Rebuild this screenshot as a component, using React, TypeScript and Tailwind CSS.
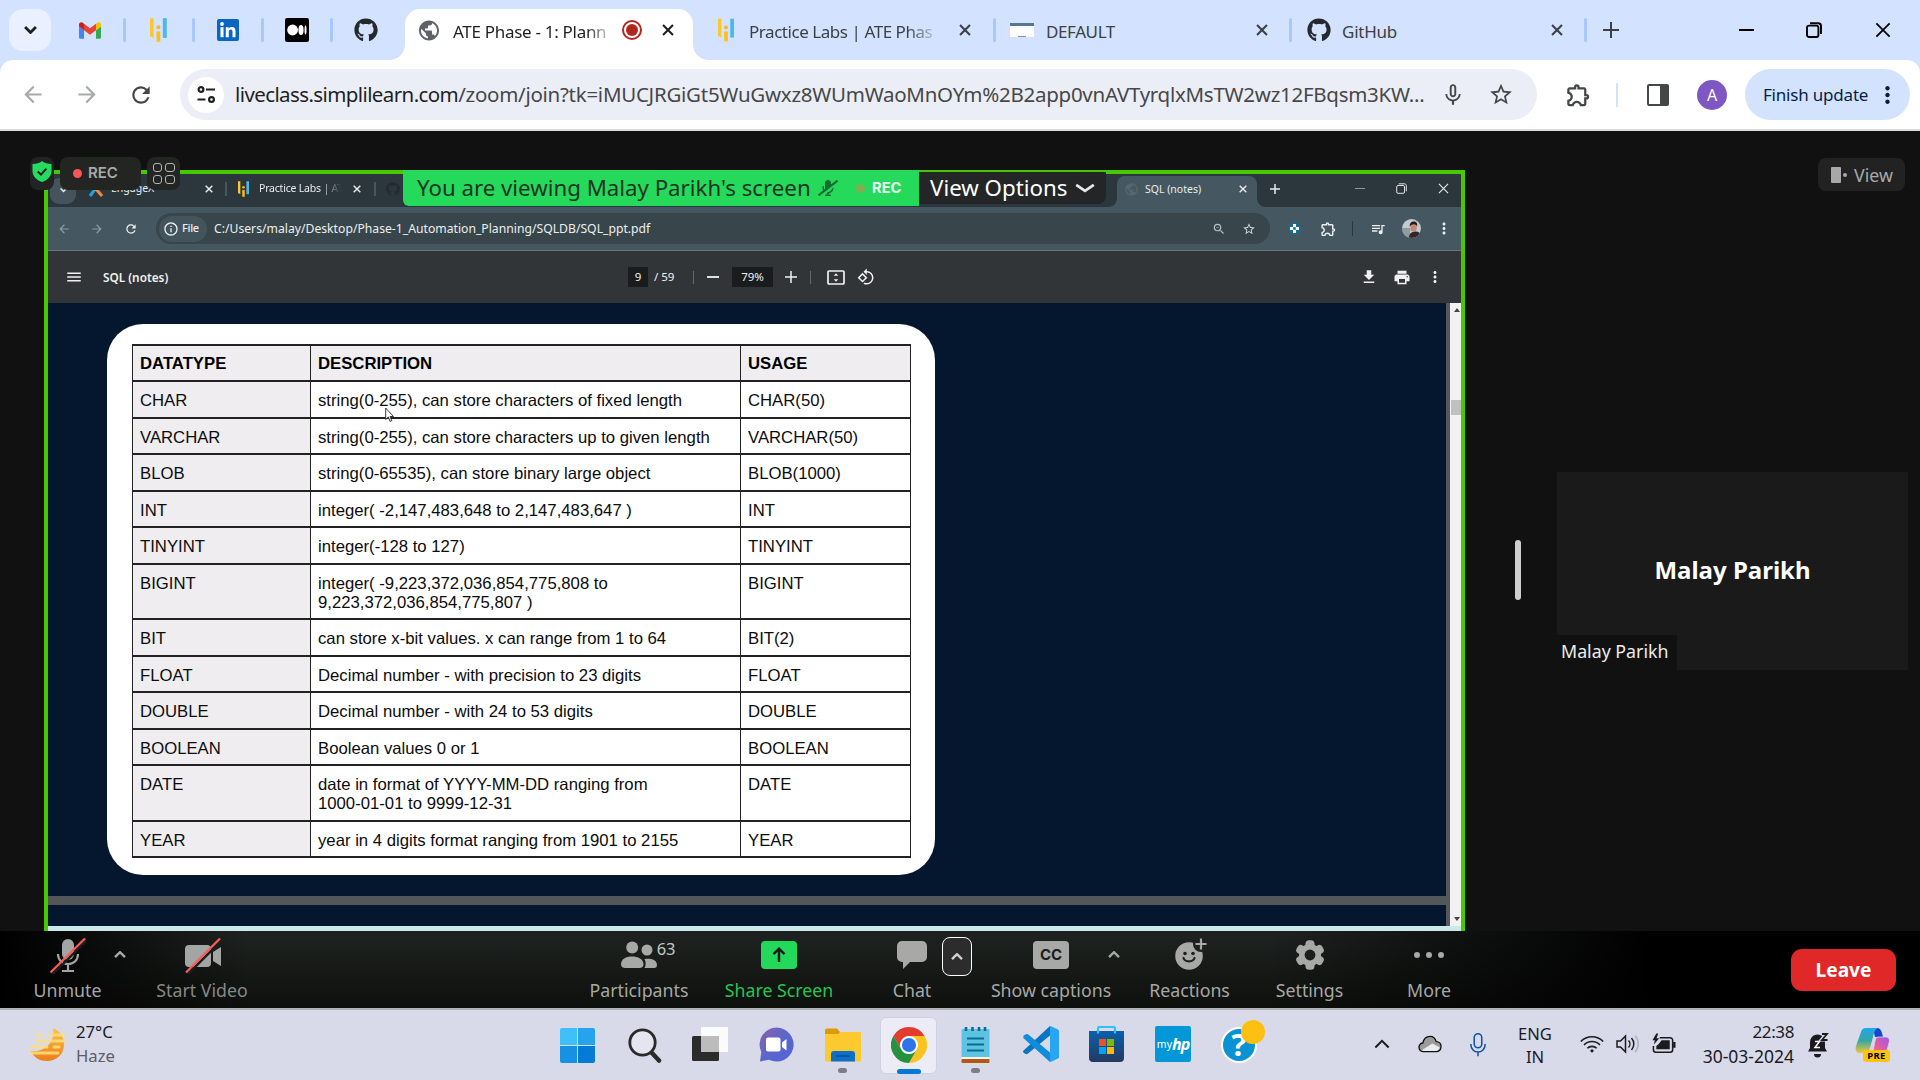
import React, { ReactNode } from "react";
import {
  MdArrowBack, MdArrowForward, MdRefresh, MdOutlineExtension, MdStarBorder, MdMicNone, MdZoomOut,
  MdQueueMusic, MdFileDownload, MdPrint, MdMoreVert, MdMenu, MdRotate90DegreesCcw, MdPublic, MdInfoOutline,
} from "react-icons/md";
import { FaGithub, FaMicrophoneSlash } from "react-icons/fa";

/* A fixed-size flex cell whose content is centred. */
function Cell({ c, children }: { c: string; children?: ReactNode }) {
  return <div className={"flex shrink-0 items-center justify-center " + c}>{children}</div>;
}
function Text({ c, children }: { c: string; children?: ReactNode }) {
  return <div className={"shrink-0 whitespace-nowrap " + c}>{children}</div>;
}
function Close({ size, w = 2.4 }: { size: number; w?: number }) {
  return (
    <svg width={size} height={size} viewBox="0 0 14 14" fill="none" stroke="currentColor" strokeWidth={w}>
      <path d="M1.2 1.2 12.8 12.8M12.8 1.2 1.2 12.8" />
    </svg>
  );
}
function Plus({ size, w = 2 }: { size: number; w?: number }) {
  return (
    <svg width={size} height={size} viewBox="0 0 16 16" fill="none" stroke="currentColor" strokeWidth={w}>
      <path d="M8 0V16M0 8H16" />
    </svg>
  );
}
function Restore({ size, w }: { size: number; w: number }) {
  return (
    <svg width={size} height={size} viewBox="0 0 16 16" fill="none" stroke="currentColor" strokeWidth={w}>
      <rect x="1" y="3.6" width="11.4" height="11.4" rx="2" />
      <path d="M4 1.2H12.2C14 1.2 15 2.2 15 4V12" />
    </svg>
  );
}
function Caret({ down = false, size = 12, w = 2.4 }: { down?: boolean; size?: number; w?: number }) {
  return (
    <svg width={size} height={size * 0.6} viewBox="0 0 12 7.2" fill="none" stroke="currentColor" strokeWidth={w}>
      <path d={down ? "M1 1 6 6 11 1" : "M1 6.2 6 1.2 11 6.2"} />
    </svg>
  );
}
function Bars({ h }: { h: number }) {
  return (
    <svg width={h * 0.7} height={h} viewBox="0 0 17 24">
      <path d="M0 0H3.6V20L0 18Z" fill="#fec62e" />
      <rect x="13" y="0" width="4" height="20" fill="#4bb8ee" />
      <circle cx="8.5" cy="9.3" r="2" fill="#fbb91a" />
      <rect x="6.6" y="13.5" width="3.8" height="10.5" fill="#fdc010" />
    </svg>
  );
}
function Gmail() {
  return (
    <svg width="22" height="17" viewBox="52 42 88 66">
      <path fill="#4285f4" d="M58 108h14V74L52 59v43c0 3.32 2.69 6 6 6" />
      <path fill="#34a853" d="M120 108h14c3.32 0 6-2.69 6-6V59l-20 15" />
      <path fill="#fbbc04" d="M120 48v26l20-15v-8c0-7.42-8.47-11.65-14.4-7.2" />
      <path fill="#ea4335" d="M72 74V48l24 18 24-18v26L96 92" />
      <path fill="#c5221f" d="M52 51v8l20 15V48l-5.6-4.2c-5.94-4.45-14.4-.22-14.4 7.2" />
    </svg>
  );
}
function Chrome() {
  return (
    <svg width="36" height="36" viewBox="0 0 48 48">
      <circle cx="24" cy="24" r="12" fill="#fff" />
      <path fill="#e33b2e" d="M24,12H44.7812a23.9939,23.9939,0,0,0-41.5639.0029L13.6079,30l.0093-.0024A11.9852,11.9852,0,0,1,24,12Z" />
      <path fill="#fcc31e" d="M34.3913,30.0029,24.0007,48A23.994,23.994,0,0,0,44.78,12.0031H23.9989l-.0025.0093A11.985,11.985,0,0,1,34.3913,30.0029Z" />
      <path fill="#26923f" d="M13.6086,30.0031,3.218,12.006A23.994,23.994,0,0,0,24.0025,48L34.3931,30.0029l-.0067-.0068a11.9852,11.9852,0,0,1-20.7778.007Z" />
      <circle cx="24" cy="24" r="9.4" fill="#2a75ec" />
    </svg>
  );
}
const Sep = ({ c }: { c: string }) => <div className={"h-6 w-[3px] shrink-0 rounded-full bg-[#a8c7fa] " + c} />;

function TabStrip() {
  return (
    <div className="flex h-[60px] items-center text-[17px] text-[#3c4043]">
      <Cell c="ml-[9px] h-[42px] w-[42px] rounded-[14px] bg-[#e9f0ff] text-[#1f1f1f]"><Caret down size={13} w={2.6} /></Cell>
      <Cell c="ml-[28px] w-[22px]"><Gmail /></Cell>
      <Sep c="ml-[22px]" />
      <Cell c="ml-[24px] w-[17px]"><Bars h={24} /></Cell>
      <Sep c="ml-[25px]" />
      <Cell c="ml-[22px] w-[22px]">
        <div className="flex h-[22px] w-[22px] items-center justify-center rounded-[2px] bg-[#0a66c2]">
          <svg width="18" height="18" viewBox="0 0 18 18" fill="#fff">
            <circle cx="3" cy="3" r="1.9" /><rect x="1.5" y="6.2" width="3" height="10" />
            <path d="M6.8 6.2h2.9v1.4c.6-1 1.7-1.7 3.1-1.7 2.9 0 3.7 1.9 3.7 4.4v5.9h-3v-5.3c0-1.4-.2-2.5-1.7-2.5s-2 1.100-2 2.500v5.300h-3z" />
          </svg>
        </div>
      </Cell>
      <Sep c="ml-[22px]" />
      <Cell c="ml-[21px] h-6 w-6 rounded-[2px] bg-black">
        <svg width="20" height="12" viewBox="0 0 20 12" fill="#fff">
          <circle cx="5.600" cy="6" r="5.400" /><ellipse cx="14" cy="6" rx="2.600" ry="5.100" /><ellipse cx="18.500" cy="6" rx="1" ry="4.600" />
        </svg>
      </Cell>
      <Sep c="ml-[21px]" />
      <Cell c="ml-[21px] w-6 text-[#24292f]"><FaGithub size={24} /></Cell>
      <div className="relative ml-[27px] mt-[9px] flex h-[51px] w-[288px] shrink-0 items-center rounded-t-[15px] bg-white pb-[9px] text-[#1f1f1f]">
        <span className="absolute -left-[15px] bottom-0 h-[15px] w-[15px] bg-[radial-gradient(circle_at_0_0,transparent_14.500px,#fff_15px)]" />
        <span className="absolute -right-[15px] bottom-0 h-[15px] w-[15px] bg-[radial-gradient(circle_at_100%_0,transparent_14.500px,#fff_15px)]" />
        <Cell c="ml-[12px] w-6 text-[#5f6368]"><MdPublic size={25} /></Cell>
        <Text c="ml-[12px] w-[162px] pt-[3px] tracking-[-0.3px] [mask-image:linear-gradient(to_right,#000_82%,transparent)]">ATE Phase - 1: Plann</Text>
        <Cell c="ml-[7px] h-5 w-5 rounded-full border-2 border-[#b3261e]"><div className="h-3 w-3 rounded-full bg-[#b3261e]" /></Cell>
        <Cell c="ml-[19px] w-[14px]"><Close size={12} /></Cell>
      </div>
      <Cell c="ml-[25px] w-[16px]"><Bars h={24} /></Cell>
      <Text c="ml-[15px] w-[192px] pt-[3px] tracking-[-0.45px] [mask-image:linear-gradient(to_right,#000_82%,transparent)]">Practice Labs | ATE Phas</Text>
      <Cell c="ml-[17px] w-[14px]"><Close size={12} /></Cell>
      <Sep c="ml-[21px]" />
      <Cell c="ml-[14px] w-6">
        <div className="h-[14px] w-6 border-t-[3px] border-[#56788a] bg-[#fdfdfd]"><div className="mx-auto mt-[10px] h-px w-2 bg-[#8b9298]" /></div>
      </Cell>
      <Text c="ml-[12px] w-[160px] pt-[3px] tracking-[-0.4px]">DEFAULT</Text>
      <Cell c="ml-[49px] w-[14px]"><Close size={12} /></Cell>
      <Sep c="ml-[20px]" />
      <Cell c="ml-[15px] w-6 text-[#24292f]"><FaGithub size={24} /></Cell>
      <Text c="ml-[11px] w-[160px] pt-[3px] tracking-[-0.25px]">GitHub</Text>
      <Cell c="ml-[48px] w-[14px]"><Close size={12} /></Cell>
      <Sep c="ml-[20px]" />
      <Cell c="ml-[16px] w-4"><Plus size={16} /></Cell>
      <div className="ml-[120px] h-[2px] w-[15px] shrink-0 bg-black" />
      <Cell c="ml-[52px] w-4 text-black"><Restore size={16} w={1.9} /></Cell>
      <Cell c="ml-[53px] w-4 text-black"><Close size={16} w={1.6} /></Cell>
    </div>
  );
}

function AddressBar() {
  return (
    <div className="flex h-[71px] items-center rounded-t-[13px] border-b-2 border-[#dcdcdc] bg-white">
      <Cell c="ml-[20px] w-[26px] text-[#a8a9ab]"><MdArrowBack size={27} /></Cell>
      <Cell c="ml-[28px] w-[26px] text-[#a8a9ab]"><MdArrowForward size={27} /></Cell>
      <Cell c="ml-[28px] w-[26px] text-[#444746]"><MdRefresh size={28} /></Cell>
      <div className="ml-[26px] flex h-[51px] w-[1357px] shrink-0 items-center rounded-full bg-[#ebeef7]">
        <Cell c="ml-[8px] h-9 w-9 rounded-full bg-white">
          <svg width="19" height="17" viewBox="0 0 19 17" fill="none" stroke="#1f1f1f" strokeWidth="2.200">
            <circle cx="4" cy="3.500" r="2.400" /><path d="M9 3.500h9M0.500 13.500h8" /><circle cx="14.500" cy="13.500" r="2.400" />
          </svg>
        </Cell>
        <Text c="ml-[11px] w-[1190px] text-[20.500px] text-[#474747]"><span className="tracking-[-0.6px] text-[#1f1f1f]">liveclass.simplilearn.com</span><span className="tracking-[-0.27px]">/zoom/join?tk=iMUCJRGiGt5WuGwxz8WUmWaoMnOYm%2B2app0vnAVTyrqlxMsTW2wz12FBqsm3KW...</span></Text>
        <Cell c="ml-[15px] w-[26px] text-[#444746]"><MdMicNone size={30} /></Cell>
        <Cell c="ml-[22px] w-[26px] text-[#444746]"><MdStarBorder size={29} /></Cell>
      </div>
      <Cell c="ml-[28px] w-[27px] text-[#444746]"><MdOutlineExtension size={30} /></Cell>
      <div className="ml-[24px] h-6 w-[2px] bg-[#d3e2fe]" />
      <Cell c="ml-[28px] w-[23px]">
        <div className="h-[22px] w-[22px] rounded-[2px] border-2 border-r-[9px] border-[#444746]" />
      </Cell>
      <Cell c="ml-[28px] h-[30px] w-[30px] rounded-full bg-[#7e57c2] text-[16px] text-white">A</Cell>
      <div className="ml-[18px] flex h-[51px] w-[165px] shrink-0 items-center rounded-full bg-[#d3e3fd] text-[#041e49]">
        <Text c="ml-[18px] w-[106px] text-[17px] tracking-[-0.2px]">Finish update</Text>
        <Cell c="ml-[5px] w-[27px]"><MdMoreVert size={30} /></Cell>
      </div>
    </div>
  );
}

function SharedBrowser() {
  return (
    <>
      <div className="flex h-[33px] items-center bg-[#2c373d] pb-[4px] text-[10.500px] text-[#e8ecee]">
        <Cell c="ml-[2px] mt-[4px] h-[26px] w-[26px] rounded-[9px] bg-[#45545c]"><Caret down size={7} w={2.600} /></Cell>
        <Cell c="ml-[13px] w-[14px]">
          <svg width="14" height="16" viewBox="0 0 14 16" fill="none" strokeWidth="3"><path d="M1 15 7 7" stroke="#1fa4e0" /><path d="M1 1 13 15" stroke="#f0883a" /></svg>
        </Cell>
        <Text c="ml-[8px] w-[90px] pt-px">EngageX</Text>
        <Cell c="ml-[3px] w-[9px]"><Close size={8} w={2.600} /></Cell>
        <div className="ml-[12px] h-[14px] w-[2px] bg-[#48565d]" />
        <Cell c="ml-[11px] w-[11px]"><Bars h={16} /></Cell>
        <Text c="ml-[10px] w-[82px] pt-px tracking-[-0.2px] [mask-image:linear-gradient(to_right,#000_75%,transparent)]">Practice Labs | AT</Text>
        <Cell c="ml-[11px] w-[9px]"><Close size={8} w={2.600} /></Cell>
        <div className="ml-[13px] h-[14px] w-[2px] bg-[#48565d]" />
        <Cell c="ml-[9px] w-[15px] text-[#222b30]"><FaGithub size={14} /></Cell>
        <div className="relative ml-[717px] mt-[6px] flex h-[31px] w-[140px] shrink-0 items-center rounded-t-[8px] bg-[#455760] pb-[5px]">
          <span className="absolute -left-[8px] bottom-0 h-[8px] w-[8px] bg-[radial-gradient(circle_at_0_0,transparent_7.500px,#455760_8px)]" />
          <span className="absolute -right-[8px] bottom-0 h-[8px] w-[8px] bg-[radial-gradient(circle_at_100%_0,transparent_7.500px,#455760_8px)]" />
          <Cell c="ml-[7px] w-[15px] text-[#59666d]"><MdPublic size={15} /></Cell>
          <Text c="ml-[6px] w-[80px] pt-[2px]">SQL (notes)</Text>
          <Cell c="ml-[13px] w-[9px]"><Close size={8} w={2.400} /></Cell>
        </div>
        <Cell c="ml-[13px] w-[10px]"><Plus size={10} w={2.400} /></Cell>
        <div className="ml-[75px] h-px w-[10px] bg-[#8f989c]" />
        <Cell c="ml-[30px] w-[12px]"><Restore size={11} w={1.400} /></Cell>
        <Cell c="ml-[31px] w-[11px]"><Close size={11} w={1.400} /></Cell>
      </div>
      <div className="flex h-[44px] items-center border-b border-[#6d7579] bg-[#455760] text-[#eceff0]">
        <Cell c="ml-[9px] w-[14px] text-[#8f9ba1]"><MdArrowBack size={16} /></Cell>
        <Cell c="ml-[19px] w-[14px] text-[#8f9ba1]"><MdArrowForward size={16} /></Cell>
        <Cell c="ml-[20px] w-[14px]"><MdRefresh size={18} /></Cell>
        <div className="ml-[18px] flex h-[31px] w-[1114px] shrink-0 items-center rounded-full bg-[#38454a]">
          <div className="ml-[3px] flex h-[26px] w-[48px] shrink-0 items-center rounded-full bg-[#44545c] pl-[4px] text-[11px] font-medium">
            <MdInfoOutline size={16} /><Text c="ml-[3px] tracking-[-0.3px]">File</Text>
          </div>
          <Text c="ml-[7px] w-[440px] pt-px text-[12.200px]">C:/Users/malay/Desktop/Phase-1_Automation_Planning/SQLDB/SQL_ppt.pdf</Text>
          <Cell c="ml-[558px] w-[14px] text-[#b7c0c4]"><MdZoomOut size={18} /></Cell>
          <Cell c="ml-[16px] w-[14px] text-[#cfd5d8]"><MdStarBorder size={18} /></Cell>
        </div>
        <Cell c="ml-[18px] h-[13px] w-[13px] rounded-full bg-[#1b6890]">
          <svg width="9" height="9" viewBox="0 0 9 9"><path d="M3 0h3v3h3v3h-3v3h-3v-3h-3v-3h3z" fill="#fff" /><rect x="3.200" y="3.200" width="2.600" height="2.600" fill="#1b6890" /></svg>
        </Cell>
        <Cell c="ml-[19px] w-[17px]"><MdOutlineExtension size={20} /></Cell>
        <div className="ml-[15px] h-[15px] w-px bg-[#2b373c]" />
        <Cell c="ml-[17px] w-[16px]"><MdQueueMusic size={20} /></Cell>
        <Cell c="ml-[16px] w-[19px]">
          <svg width="19" height="19" viewBox="0 0 19 19">
            <clipPath id="face"><circle cx="9.500" cy="9.500" r="9.400" /></clipPath>
            <g clipPath="url(#face)">
              <rect width="19" height="19" fill="#c3cbd0" /><rect y="9" width="8" height="10" fill="#8f9ba3" />
              <path d="M7 19C7 15 9 13 12.500 12.500s5.500 1 6.500 3v4z" fill="#35222c" /><ellipse cx="11.500" cy="8.500" rx="3.300" ry="4.300" fill="#c08a77" />
              <path d="M7.800 7.500C7.500 3.500 10 2 12.500 2.500c2.500.4 3 2.500 2.600 5-1-2.500-5-3.500-7.300 0z" fill="#241c1e" />
            </g>
          </svg>
        </Cell>
        <Cell c="ml-[14px] w-[18px]"><MdMoreVert size={19} /></Cell>
      </div>
      <div className="flex h-[52px] items-center bg-[#323538] text-[#f1f1f1]">
        <Cell c="ml-[16px] w-[20px]"><MdMenu size={18} /></Cell>
        <Text c="ml-[19px] w-[101px] pt-px text-[11.800px] font-semibold">SQL (notes)</Text>
        <Cell c="ml-[424px] h-[20px] w-[20px] bg-[#191b1c] text-[11.500px]">9</Cell>
        <Text c="ml-[6px] w-[30px] text-[11.500px]">/ 59</Text>
        <div className="ml-[9px] h-[13px] w-px bg-[#66696b]" />
        <div className="ml-[13px] h-[2px] w-[12px] bg-[#e0e0e0]" />
        <Cell c="ml-[13px] h-[20px] w-[41px] bg-[#191b1c] text-[11.500px]">79%</Cell>
        <Cell c="ml-[12px] w-[12px]"><Plus size={12} /></Cell>
        <div className="ml-[13px] h-[13px] w-px bg-[#66696b]" />
        <Cell c="ml-[16px] w-[18px]">
          <svg width="18" height="15" viewBox="0 0 18 15"><rect x="1" y="1" width="16" height="13" rx="1" fill="none" stroke="#f1f1f1" strokeWidth="1.700" /><path d="M9 3.200l2.200 2.600h-4.400zM9 11.800l2.200-2.600h-4.400z" fill="#f1f1f1" /></svg>
        </Cell>
        <Cell c="ml-[12px] w-[18px]"><MdRotate90DegreesCcw size={18} /></Cell>
        <Cell c="ml-[485px] w-[18px]"><MdFileDownload size={20} /></Cell>
        <Cell c="ml-[15px] w-[18px]"><MdPrint size={19} /></Cell>
        <Cell c="ml-[15px] w-[18px]"><MdMoreVert size={18} /></Cell>
      </div>
    </>
  );
}

const TABLE: [string, string, string, string][] = [
  ["h-[37px]", "CHAR", "string(0-255), can store characters of fixed length", "CHAR(50)"],
  ["h-[36px]", "VARCHAR", "string(0-255), can store characters up to given length", "VARCHAR(50)"],
  ["h-[37px]", "BLOB", "string(0-65535), can store binary large object", "BLOB(1000)"],
  ["h-[36px]", "INT", "integer( -2,147,483,648 to 2,147,483,647 )", "INT"],
  ["h-[37px]", "TINYINT", "integer(-128 to 127)", "TINYINT"],
  ["h-[55px]", "BIGINT", "integer( -9,223,372,036,854,775,808 to\n9,223,372,036,854,775,807 )", "BIGINT"],
  ["h-[37px]", "BIT", "can store x-bit values. x can range from 1 to 64", "BIT(2)"],
  ["h-[36px]", "FLOAT", "Decimal number - with precision to 23 digits", "FLOAT"],
  ["h-[37px]", "DOUBLE", "Decimal number - with 24 to 53 digits", "DOUBLE"],
  ["h-[36px]", "BOOLEAN", "Boolean values 0 or 1", "BOOLEAN"],
  ["h-[56px]", "DATE", "date in format of YYYY-MM-DD ranging from\n1000-01-01 to 9999-12-31", "DATE"],
  ["h-[36px]", "YEAR", "year in 4 digits format ranging from 1901 to 2155", "YEAR"],
];

function Slide() {
  return (
    <div className="flex h-[623px]">
      <div className="flex w-[1398px] shrink-0 flex-col bg-[#05172f] pt-[21px]">
        <div className="relative ml-[59px] h-[551px] w-[828px] shrink-0 rounded-[36px] bg-white pl-[25px] pt-[20px] font-['Liberation_Sans',Arial,sans-serif] text-[16.720px] leading-[19px] text-[#0c0c0c]">
          <div className="w-[779px] border-l border-t-2 border-[#222]">
            <div className="grid h-[36px] grid-cols-[178px_430px_170px] bg-[#efedf0] font-bold text-black">
              {["DATATYPE", "DESCRIPTION", "USAGE"].map((h) => (
                <div key={h} className="border-b-2 border-r border-[#222] pl-[7px] pt-[8px]">{h}</div>
              ))}
            </div>
            {TABLE.map(([h, a, b, c]) => (
              <div key={a} className={"grid grid-cols-[178px_430px_170px] whitespace-pre " + h}>
                <div className="border-b-2 border-r border-[#222] bg-[#efedf0] pl-[7px] pt-[8.500px]">{a}</div>
                <div className="border-b-2 border-r border-[#222] pl-[7px] pt-[8.500px]">{b}</div>
                <div className="border-b-2 border-r border-[#222] pl-[7px] pt-[8.500px]">{c}</div>
              </div>
            ))}
          </div>
          <svg className="absolute left-[278px] top-[83px]" width="10" height="16" viewBox="0 0 10 16"><path d="M.7 1v11.500l2.600-2.400 1.800 4.300 1.700-.7-1.800-4.200h3.500z" fill="#fff" stroke="#222" strokeWidth=".9" /></svg>
        </div>
        <div className="mt-[21px] h-[9px] bg-[#53575a]" />
        <div className="h-5" />
      </div>
      <div className="w-[4px] bg-[#55585b]" />
      <div className="flex grow flex-col items-end bg-[#f2f0f3] py-[5px]">
        <div className="mr-px border-x-[3px] border-b-[4px] border-x-transparent border-b-[#444]" />
        <div className="mt-[88px] h-[15px] w-[10px] bg-[#c0c0c0]" />
        <div className="grow" />
        <div className="mr-px border-x-[3px] border-t-[4px] border-x-transparent border-t-[#444]" />
      </div>
    </div>
  );
}

function Meeting() {
  return (
    <div className="relative flex h-[800px] bg-[#111111]">
      <div className="ml-[44px] mt-[39px] h-[761px] w-[1421px] shrink-0 border-4 border-b-0 border-[#48c800]">
        <SharedBrowser />
        <Slide />
        <div className="h-[5px] bg-[#cbe8ea]" />
      </div>
      <div className="ml-[50px] mt-[409px] h-[60px] w-[6px] rounded-full bg-[#cfcfcf]" />
      <div className="ml-[36px] mt-[341px] flex h-[198px] w-[351px] flex-col bg-[#1a1a1a] text-white">
        <div className="flex h-[163px] items-end justify-center pb-[48px] text-[24px] font-bold leading-[34px]">Malay Parikh</div>
        <div className="flex h-[35px] w-[120px] items-center bg-[#111111] pb-[2px] pl-[4px] text-[17.800px] text-[#ececec]">Malay Parikh</div>
      </div>

      <div className="absolute left-[24px] top-[26px] flex gap-[6px] pl-[6px]">
        <Cell c="h-[33px] w-6 rounded-[8px] bg-[#222423]">
          <svg className="-mt-[5px]" width="20" height="21" viewBox="0 0 20 21"><path d="M10 0C12.500 2.200 16 3 19.500 3v7c0 5.500-4.500 9.500-9.500 11C5 19.500.5 15.500.5 10V3C4 3 7.500 2.200 10 0z" fill="#24dd60" /><path d="M5.800 10.500 9 13.600 14.400 7.600" fill="none" stroke="#1c1c1c" strokeWidth="2" /></svg>
        </Cell>
        <div className="flex h-[33px] w-[81px] items-center rounded-[8px] bg-[#232522] pl-[13px]">
          <div className="h-[9px] w-[9px] rounded-full bg-[#fb5554]" />
          <Text c="ml-[6px] font-[Inter,sans-serif] text-[15px] font-semibold text-[#a9a9a9]">REC</Text>
        </div>
        <Cell c="h-[33px] w-[33px] rounded-[8px] bg-[#232522]">
          <div className="grid grid-cols-2 gap-[3px]">
            {[0, 1, 2, 3].map((i) => <div key={i} className="h-[9px] w-[9.500px] rounded-[3px] border-[1.500px] border-[#b4b4b4]" />)}
          </div>
        </Cell>
      </div>
      <div className="absolute left-[403px] top-[39px] flex">
        <div className="flex h-9 w-[516px] items-center rounded-bl-[6px] bg-[#25d95a] pl-[14px]">
          <Text c="w-[395px] text-[22.250px] text-[#1d3327]">You are viewing Malay Parikh's screen</Text>
          <Cell c="ml-[5px] w-[22px] text-[#176a32]"><FaMicrophoneSlash className="-scale-x-100" size={20} /></Cell>
          <div className="ml-[17px] h-[9px] w-[9px] rounded-full bg-[#7fae57]" />
          <Text c="ml-[7px] font-[Inter,sans-serif] text-[14.700px] font-bold text-[#e9fbee]">REC</Text>
        </div>
        <div className="mt-[2px] flex h-8 w-[187px] items-center rounded-br-[8px] bg-[#242526] pl-[11px] text-white">
          <Text c="w-[139px] text-[22.300px]">View Options</Text>
          <Cell c="ml-[6px] w-[20px] text-[#e8e8e8]">
            <svg width="20" height="10" viewBox="0 0 20 10" fill="none" stroke="currentColor" strokeWidth="2.800"><path d="M1.200 1.800 10 7.800 18.800 1.800" /></svg>
          </Cell>
        </div>
      </div>
      <div className="absolute right-[15px] top-[27px] flex h-[33px] w-[87px] items-center rounded-[8px] bg-[#222222] pl-[13px] text-[17.800px] text-[#a8a8a8]">
        <div className="h-4 w-[10px] rounded-[1px] bg-[#a8a8a8]" /><div className="ml-[2px] h-1 w-1 rounded-full bg-[#a8a8a8]" />
        <Text c="ml-[7px] pt-px">View</Text>
      </div>
    </div>
  );
}

function Control({ c, label, children }: { c: string; label: string; children: ReactNode }) {
  return (
    <div className={"flex shrink-0 flex-col items-center text-[17.750px] text-[#a6a8a6] " + c}>
      <div className="flex h-12 items-center justify-center">{children}</div>
      <div className="-mt-px whitespace-nowrap leading-6">{label}</div>
    </div>
  );
}

function Controls() {
  return (
    <div className="flex h-[77px] bg-[linear-gradient(to_right,#000_0%,transparent_13%,transparent_66%,#000_86%),linear-gradient(#1e2321,#0e100d)] text-[#a6a8a6]">
      <Control c="ml-[22px] w-[91px]" label="Unmute">
        <svg width="37" height="37" viewBox="0 0 37 37">
          <rect x="13" y="2" width="12" height="21" rx="6" fill="#a3a5a4" />
          <path d="M9 17c0 6 4 10 10 10s10-4 10-10M19 27v6M13 34h12" fill="none" stroke="#a3a5a4" strokeWidth="2.200" />
          <path d="M3 38 38 3" stroke="#1a1e1c" strokeWidth="2.500" /><path d="M1.500 35.500 36 1.500" stroke="#fa5b57" strokeWidth="2.300" />
        </svg>
      </Control>
      <Cell c="-ml-px h-12 w-4"><Caret /></Cell>
      <Control c="ml-[14px] w-[120px] !text-[#868886]" label="Start Video">
        <svg width="37" height="37" viewBox="0 0 37 37">
          <rect x="1" y="8" width="26" height="22" rx="4" fill="#a3a5a4" /><path d="M29 15 37 10V29L29 24z" fill="#a3a5a4" />
          <path d="M3 38 38 3" stroke="#1a1e1c" strokeWidth="2.500" /><path d="M2 35.500 36 1.500" stroke="#fa5b57" strokeWidth="2.300" />
        </svg>
      </Control>
      <Control c="ml-[317px] w-[120px]" label="Participants">
        <div className="flex">
          <svg className="ml-[18px]" width="36" height="28" viewBox="0 0 36 28" fill="#a8a8a7">
            <circle cx="11.200" cy="6.500" r="6" /><path d="M0 23.500C0 18 5 15.500 11 15.500s11.500 2.500 11.500 8c0 2.500-2 3.500-4 3.500H4c-2 0-4-1-4-3.500z" />
            <circle cx="26" cy="9" r="5.500" /><path d="M23.500 18c6-1 12.500.5 12.500 6 0 2-1 3-3 3h-9.500c1.500-2.500 1.500-6 0-9z" />
          </svg>
          <span className="-mt-[3px] text-[16.500px] leading-[22px] tracking-[-0.3px] text-[#c4c6c4]">63</span>
        </div>
      </Control>
      <Control c="ml-[15px] w-[130px] !text-[#23c552]" label="Share Screen">
        <div className="flex h-[28px] w-9 items-center justify-center rounded-[4px] bg-[#23d959]">
          <svg width="14" height="16" viewBox="0 0 14 16" fill="none" stroke="#151a16" strokeWidth="2.400"><path d="M7 15V2M1.500 7.200 7 1.700 12.500 7.200" /></svg>
        </div>
      </Control>
      <Control c="ml-[40px] w-[56px]" label="Chat">
        <svg width="30" height="28" viewBox="0 0 30 28"><path d="M5 0H25a5 5 0 0 1 5 5V16a5 5 0 0 1-5 5H13L6 28V21H5a5 5 0 0 1-5-5V5A5 5 0 0 1 5 0z" fill="#a8a8a7" /></svg>
      </Control>
      <Cell c="ml-[2px] mt-[6px] h-[39px] w-[30px] rounded-[8px] border border-white bg-[#2b2c2b] text-[#d0d0d0]"><Caret /></Cell>
      <Control c="ml-[19px] w-[120px]" label="Show captions">
        <div className="flex h-[28px] w-9 items-center justify-center rounded-[4px] bg-[#a8a8a7] font-[Inter,sans-serif] text-[15px] font-bold text-[#1b1e1c]">CC</div>
      </Control>
      <Cell c="-ml-[5px] h-12 w-4"><Caret /></Cell>
      <Control c="ml-[17px] w-[101px]" label="Reactions">
        <svg className="-mt-[2px] ml-[3px]" width="32" height="32" viewBox="0 0 32 32">
          <circle cx="14" cy="18" r="13.800" fill="#a8a8a7" /><circle cx="26" cy="6" r="8" fill="#1c211f" />
          <path d="M26 .5v11M20.500 6h11" stroke="#a8a8a7" strokeWidth="2.200" />
          <circle cx="10" cy="15.500" r="1.800" fill="#1c211f" /><circle cx="18" cy="15.500" r="1.800" fill="#1c211f" />
          <path d="M8.500 20c1.500 4.500 9.500 4.500 11 0" fill="none" stroke="#1c211f" strokeWidth="2.200" strokeLinecap="round" />
        </svg>
      </Control>
      <Control c="ml-[19px] w-[101px]" label="Settings">
        <svg width="30" height="30" viewBox="-15 -15 30 30">
          <circle r="11" fill="#a8a8a7" />
          {[0, 60, 120, 180, 240, 300].map((a) => <rect key={a} x="-4.500" y="-14.800" width="9" height="10" rx="3.500" fill="#a8a8a7" transform={`rotate(${a})`} />)}
          <circle r="5.400" fill="#1a1e1c" />
        </svg>
      </Control>
      <Control c="ml-[39px] w-[60px]" label="More">
        <div className="flex gap-[6px]">{[0, 1, 2].map((i) => <div key={i} className="h-[6px] w-[6px] rounded-full bg-[#a8a8a7]" />)}</div>
      </Control>
      <Cell c="ml-[332px] mt-[18px] h-[42px] w-[105px] rounded-[11px] bg-[#e02828] text-[19.100px] font-bold text-white">Leave</Cell>
    </div>
  );
}

function Taskbar() {
  return (
    <div className="flex h-[72px] items-center border-t-2 border-[#b2b2bb] bg-[#d8daea] text-[16.700px] leading-6 text-[#1b1b1f]">
      <Cell c="ml-[28px] w-[38px]">
        <svg width="37" height="36" viewBox="0 0 37 36">
          <defs><linearGradient id="moon" x1="0" y1="0" x2="0" y2="1"><stop offset="0" stopColor="#f7c843" /><stop offset="1" stopColor="#ee7d1c" /></linearGradient></defs>
          <path d="M24 1C31 4 35 10 35 17.500 35 27 28 34 18 34 11 34 5 31 2 24c12 2 25-8 22-23z" fill="url(#moon)" />
          <path d="M8 8h4M19 8h16M8 14h27M2 20h16M25 20h5M2 26h27" stroke="#fade7d" strokeOpacity=".85" strokeWidth="3" strokeLinecap="round" />
        </svg>
      </Cell>
      <div className="ml-[10px] w-[60px] pb-[2px]"><div>27°C</div><div className="text-[#5d5e66]">Haze</div></div>
      <Cell c="ml-[424px] w-[35px]">
        <div className="grid grid-cols-2 gap-px overflow-hidden rounded-[2px]">
          <div className="h-[17px] w-[17px] bg-[#3fc0f9]" /><div className="h-[17px] w-[17px] bg-[#25a3ec]" /><div className="h-[17px] w-[17px] bg-[#1792e3]" /><div className="h-[17px] w-[17px] bg-[#057bd6]" />
        </div>
      </Cell>
      <Cell c="ml-[33px] w-[34px]">
        <svg width="34" height="35" viewBox="0 0 34 35" fill="none" stroke="#2a2a2a"><circle cx="14.500" cy="14.500" r="12.700" fill="#e4e5f0" strokeWidth="2.800" /><path d="M24 25 31 32.500" strokeWidth="4.500" strokeLinecap="round" /></svg>
      </Cell>
      <Cell c="ml-[30px] w-[37px] pb-[2px]">
        <svg width="37" height="34" viewBox="0 0 37 34"><rect x="0" y="9" width="27" height="25" rx="1.500" fill="#2b2b2b" /><rect x="9" y="0" width="27" height="25" rx="1" fill="#fbfbfb" /><rect x="9" y="9" width="18" height="16" fill="#bcbcbc" /></svg>
      </Cell>
      <Cell c="ml-[30px] w-[35px] pb-px">
        <svg width="35" height="35" viewBox="0 0 35 35">
          <defs><linearGradient id="teams" x1="0" y1="0" x2="1" y2="1"><stop offset="0" stopColor="#8b62a8" /><stop offset=".5" stopColor="#5b66cc" /><stop offset="1" stopColor="#5562d8" /></linearGradient></defs>
          <path d="M17.500.5a17 17 0 1 1-7.500 32.200L1 34.500 2.300 25A17 17 0 0 1 17.500.5z" fill="url(#teams)" /><rect x="7" y="10.500" width="14.500" height="14" rx="2" fill="#fff" /><path d="M23 15.500 27.500 12V23.500L23 20z" fill="#fff" />
        </svg>
      </Cell>
      <Cell c="relative ml-[30px] h-[70px] w-[37px] pb-px">
        <svg width="37" height="34" viewBox="0 0 37 34">
          <path d="M1 2.500A2 2 0 0 1 3 .5h10l3 3.500-2 3H1z" fill="#de9a05" /><path d="M1 6h13l3-2h19a1 1 0 0 1 1 1v27.500a1 1 0 0 1-1 1H2a1 1 0 0 1-1-1z" fill="#fcc92f" /><path d="M7 33.500V26a3 3 0 0 1 3-3h18a3 3 0 0 1 3 3v7.500z" fill="#0c70c8" /><path d="M12 28h14" stroke="#07509a" strokeWidth="1.600" />
        </svg>
        <span className="absolute bottom-[7px] h-[5px] w-[9px] rounded-full bg-[#7c7d87]" />
      </Cell>
      <Cell c="relative ml-[19px] h-[57px] w-[57px] rounded-[6px] border border-[#cfd0e0] bg-[#ebecf5] pb-px">
        <Chrome />
        <span className="absolute -bottom-px h-[5px] w-6 rounded-full bg-[#0378d6]" />
      </Cell>
      <Cell c="relative ml-[24px] h-[70px] w-[29px] pb-px">
        <svg width="29" height="36" viewBox="0 0 29 36">
          <rect x=".5" y="2" width="28" height="29" rx="1" fill="#5dc3e0" /><rect x=".5" y="30" width="28" height="2" fill="#f4f4f4" /><rect x=".5" y="32" width="28" height="4" rx="1" fill="#b4580f" />
          <path d="M5 0v4M11.500 0v4M18 0v4M24 0v4" stroke="#0f6a91" strokeWidth="2.600" /><path d="M6 11.500h17M6 17.500h17M6 23.500h17" stroke="#0b6d95" strokeWidth="2.200" />
        </svg>
        <span className="absolute bottom-[7px] h-[5px] w-[9px] rounded-full bg-[#7c7d87]" />
      </Cell>
      <Cell c="ml-[33px] w-[36px] pb-[2px]">
        <svg width="36" height="36" viewBox="0 0 36 36">
          <path d="M27 0 0 25l.5 1.700 2 1.300c1 .4 2 0 2.500-.5L27 9.500z" fill="#0a76c2" /><path d="M27 36 .3 12 .5 9.500 3 8.200c1-.4 2-.1 2.600.5L27 26.500z" fill="#0f8ddb" /><path d="M26 36a3 3 0 0 0 2-.2l7-3.300a2 2 0 0 0 1-1.800V5.300a2 2 0 0 0-1-1.800L28 .2a3 3 0 0 0-2-.2c.7.200 1 .8 1 1.500v33c0 .7-.3 1.300-1 1.500z" fill="#27a6f2" />
        </svg>
      </Cell>
      <Cell c="ml-[30px] w-[35px] pb-[2px]">
        <svg width="35" height="36" viewBox="0 0 35 36">
          <path d="M9 8V2.500A1.500 1.500 0 0 1 10.500 1h14A1.500 1.500 0 0 1 26 2.500V8" fill="none" stroke="#2fc0f5" strokeWidth="2.200" />
          <defs><linearGradient id="store" x1="0" y1="0" x2="0" y2="1"><stop offset="0" stopColor="#0a60ac" /><stop offset="1" stopColor="#243a60" /></linearGradient></defs>
          <path d="M0 5H35V32a4 4 0 0 1-4 4H4a4 4 0 0 1-4-4z" fill="url(#store)" /><path d="M9 4.500v3M26 4.500v3" stroke="#2fc0f5" strokeWidth="2.200" />
          <rect x="10" y="13" width="7" height="7" fill="#f25022" /><rect x="18" y="13" width="7" height="7" fill="#7fba00" /><rect x="10" y="21" width="7" height="7" fill="#00a4ef" /><rect x="18" y="21" width="7" height="7" fill="#ffb900" />
        </svg>
      </Cell>
      <Cell c="ml-[31px] mb-[2px] h-9 w-9 rounded-[2px] bg-[#0497d8] text-white"><span className="text-[10.500px] leading-none">my</span><span className="-mt-px text-[16px] font-bold italic leading-none tracking-[-1px]">hp</span></Cell>
      <div className="relative mb-px ml-[30px] flex h-9 w-[36px] shrink-0 items-center justify-center rounded-full border-2 border-white bg-[#0a93d4] text-[31px] font-bold leading-none text-white">?
        <span className="absolute left-[18px] top-[-9px] h-6 w-6 rounded-full bg-[#fdc011]" />
      </div>
      <Cell c="ml-[117px] w-4 pb-[2px]"><Caret size={17} w={1.500} /></Cell>
      <Cell c="ml-[28px] w-6 pb-[2px]">
        <svg width="25" height="18" viewBox="0 0 25 18"><path d="M6 17C3 17 1 15 1 12.500S3 8 5 8C6 3.500 9 1 12.500 1S18 3 19 6.500c3 0 5 2.300 5 5.200S22 17 19 17z" fill="#9c9c9c" /><path d="M3 16 15 8.500 23 13 19 17H6z" fill="#ececec" /><path d="M6 17C3 17 1 15 1 12.500S3 8 5 8C6 3.500 9 1 12.500 1S18 3 19 6.500c3 0 5 2.300 5 5.200S22 17 19 17z" fill="none" stroke="#111" strokeWidth="1.400" /></svg>
      </Cell>
      <Cell c="ml-[28px] w-4 pb-px">
        <svg width="17" height="26" viewBox="0 0 17 26" fill="none" stroke="#0f50a8" strokeWidth="1.600"><rect x="4.500" y="1" width="8" height="15" rx="4" /><path d="M1 12v1a7.500 7.500 0 0 0 15 0v-1M8.500 20.500V25" /></svg>
      </Cell>
      <div className="ml-[27px] w-[44px] pb-px text-center text-[16.600px] leading-[23px]"><div>ENG</div><div>IN</div></div>
      <Cell c="ml-[23px] w-[24px] pb-[2px]">
        <svg width="24" height="18" viewBox="0 0 24 18" fill="none" stroke="#1b1b1f" strokeWidth="1.600"><path d="M.8 6.500a15.500 15.500 0 0 1 22.400 0M4 10a11 11 0 0 1 16 0M7.300 13.300a6.700 6.700 0 0 1 9.400 0" /><circle cx="12" cy="15.800" r="1.600" fill="#1b1b1f" stroke="none" /></svg>
      </Cell>
      <Cell c="ml-[12px] w-[24px] pb-[2px]">
        <svg width="24" height="20" viewBox="0 0 24 20" fill="none" stroke="#1b1b1f" strokeWidth="1.500"><path d="M1 7h3.500L9.500 2v16l-5-5H1z" /><path d="M12.500 6.500a5 5 0 0 1 0 7M15.500 4a9 9 0 0 1 0 12" /><path d="M19 1.500a13 13 0 0 1 0 17" stroke="#b0b2c0" /></svg>
      </Cell>
      <Cell c="ml-[12px] w-[24px] pb-[2px]">
        <svg width="25" height="22" viewBox="0 0 25 22"><path d="M8 4.500H19a2.500 2.500 0 0 1 2.500 2.500v10a2.500 2.500 0 0 1-2.500 2.500H4A2.500 2.500 0 0 1 1.500 17V13" fill="none" stroke="#1b1b1f" strokeWidth="1.600" /><path d="M7 11 10 7h8.500v9.500h-14V13zM22 9h2.500v6H22zM4.500 0 .5 7H3L2 11.500 7.500 5H4.700L6.500 0z" fill="#1b1b1f" /></svg>
      </Cell>
      <div className="ml-[16px] w-[102px] pb-[3px] text-right"><div className="text-[17px] tracking-[-0.4px]">22:38</div><div className="text-[17.500px]">30-03-2024</div></div>
      <Cell c="ml-[13px] w-[22px] pb-px">
        <svg width="22" height="26" viewBox="0 0 22 26"><path d="M3 11C3 6 6 2.500 10.500 2.500S18 6 18 11v5l2 3.500H1L3 16z" fill="#1b1b1f" /><path d="M7 22h7a3.500 3.500 0 0 1-7 0z" fill="#1b1b1f" /><path d="M8 9.500h4.500L8 15.500h5" fill="none" stroke="#fff" strokeWidth="1.500" /><path d="M14.500 1.200h5.500l-5.500 6.500h6" fill="none" stroke="#d8daea" strokeWidth="3.400" /><path d="M15 2h5l-5 6h5.500" fill="none" stroke="#1b1b1f" strokeWidth="1.800" /></svg>
      </Cell>
      <Cell c="relative ml-[26px] h-[36px] w-[35px] mb-[2px]">
        <svg width="35" height="34" viewBox="0 0 35 34">
          <defs>
            <linearGradient id="cpA" x1="0" y1="0" x2="0" y2="1"><stop offset="0" stopColor="#1fa5ee" /><stop offset=".5" stopColor="#36a7a8" /><stop offset="1" stopColor="#f2c632" /></linearGradient>
            <linearGradient id="cpB" x1="1" y1="0" x2="0" y2="1"><stop offset="0" stopColor="#9d55ee" /><stop offset=".6" stopColor="#f06090" /><stop offset="1" stopColor="#fa8a5a" /></linearGradient>
          </defs>
          <path d="M18 1h4c3 0 4 2 5 5l1 4h-8z" fill="#1746c9" /><path d="M11 1H23c-3 1-4 5-5 9l-3 11c-1 4-3 5-6 5H4c-3 0-4-3-3-7L6 5c1-3 2-4 5-4z" fill="url(#cpA)" />
          <path d="M23 10h8c3 0 4 3 3 6l-3 11c-1 3-2 4-5 4H14c3-1 3-4 4-7l2-10c.5-2 1.500-4 3-4z" fill="url(#cpB)" stroke="#d8daea" strokeWidth=".8" />
        </svg>
        <span className="absolute left-[8px] top-[24px] flex h-[12px] w-[27px] items-center justify-center rounded-[3px] bg-[#fdc40c] text-[9.500px] font-bold leading-none tracking-[0.3px] text-black">PRE</span>
      </Cell>
    </div>
  );
}

export default function App() {
  return (
    <div className="h-[1080px] w-[1920px] overflow-hidden bg-[#d3e2fe] font-['Noto_Sans','Open_Sans',sans-serif]">
      <TabStrip />
      <AddressBar />
      <Meeting />
      <Controls />
      <Taskbar />
    </div>
  );
}
